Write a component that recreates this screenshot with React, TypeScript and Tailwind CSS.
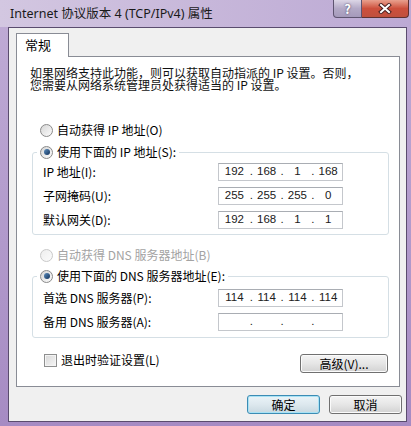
import type { ReactNode } from 'react';

const ipRows = [
    { label: 'IP 地址(I):', parts: ['192', '168', '1', '168'] },
    { label: '子网掩码(U):', parts: ['255', '255', '255', '0'] },
    { label: '默认网关(D):', parts: ['192', '168', '1', '1'] },
];

const dnsRows = [
    { label: '首选 DNS 服务器(P):', parts: ['114', '114', '114', '114'] },
    { label: '备用 DNS 服务器(A):', parts: ['', '', '', ''] },
];

function Radio({ checked, disabled }: { checked?: boolean; disabled?: boolean }) {
    return (
        <span
            className={`w-[13px] h-[13px] rounded-full border flex items-center justify-center shrink-0 bg-gradient-to-br ${disabled ? 'border-[#c9c9c9] from-[#eeeeee] to-[#fbfbfb]' : 'border-[#8a8a8a] from-[#d6d6d6] to-[#fcfcfc]'}`}
        >
            {checked && <span className="w-[6px] h-[6px] rounded-full bg-gradient-to-br from-[#5d8fc0] to-[#12325a]" />}
        </span>
    );
}

function RadioRow({ children, checked, disabled }: { children: ReactNode; checked?: boolean; disabled?: boolean }) {
    return (
        <div className={`flex items-center gap-[4px] h-[16px] leading-[16px] ${disabled ? 'text-[#a3a3a3]' : 'text-black'}`}>
            <Radio checked={checked} disabled={disabled} />
            <span>{children}</span>
        </div>
    );
}

function IpBox({ parts }: { parts: string[] }) {
    return (
        <div className="w-[125px] h-[18px] border border-[#c4c7cc] border-t-[#a9adb3] bg-white flex items-center font-['Liberation_Sans',sans-serif] text-[11.5px] text-[#202020]">
            {parts.map((p, i) => (
                <div key={i} className="flex flex-1 items-center">
                    {i > 0 && <span className="w-[3px] text-center">.</span>}
                    <span className="flex-1 text-center">{p}</span>
                </div>
            ))}
        </div>
    );
}

function AddrRows({ rows, first }: { rows: { label: string; parts: string[] }[]; first: number }) {
    return (
        <div className="flex flex-col gap-[6px]" style={{ paddingTop: first }}>
            {rows.map(r => (
                <div key={r.label} className="flex items-center pl-[10px]">
                    <span className="w-[175px]">{r.label}</span>
                    <IpBox parts={r.parts} />
                </div>
            ))}
        </div>
    );
}

function Btn({ children, w, primary }: { children: ReactNode; w: string; primary?: boolean }) {
    return (
        <button
            className={`${w} h-[19px] rounded-[3px] border text-[12px] leading-none text-black bg-gradient-to-b ${primary ? 'border-[#3c8cb4] from-[#eaf4f8] via-[#dde8ee] to-[#c8d8e0] shadow-[inset_0_0_0_1px_#a8e2f5]' : 'border-[#707070] from-[#f4f4f4] via-[#e6e6e6] to-[#d2d2d2] shadow-[inset_0_0_0_1px_#fbfbfb]'}`}
        >
            {children}
        </button>
    );
}

export default function App() {
    return (
        <div className="w-[411px] h-[426px] overflow-hidden bg-gradient-to-b from-[#c0acd6] to-[#a68bc3] flex flex-col font-['Noto_Sans_CJK_SC','Noto_Sans',sans-serif] text-[12px] text-black">
            {/* title bar */}
            <div className="h-[27px] flex items-start pl-[10px] pr-[2px] bg-gradient-to-r from-[#d3c7e1] via-[#c7b7da] to-[#bca9d4]">
                <span className="mt-[5px] text-[12.5px] leading-[18px] text-[#1a1a1a] font-['Noto_Sans','Noto_Sans_CJK_SC',sans-serif]">
                    Internet 协议版本 4 (TCP/IPv4) 属性
                </span>
                <div className="ml-auto flex h-[18px]">
                    <div className="w-[29px] h-[18px] rounded-bl-[4px] border border-t-0 border-[#5e5470] bg-gradient-to-b from-[#dcd6e6] via-[#b3a9c6] to-[#a59abb] flex items-center justify-center text-white font-bold text-[13px] [text-shadow:0_0_2px_#3a3050]">
                        ?
                    </div>
                    <div className="w-[47px] h-[18px] rounded-br-[4px] border border-l-0 border-t-0 border-[#5e3030] bg-gradient-to-b from-[#e8a08e] via-[#cc4f3c] to-[#c0503e] flex items-center justify-center">
                        <svg width="14" height="11" viewBox="0 0 14 11">
                            <path d="M3 2 L11 9 M11 2 L3 9" stroke="#4a2020" strokeWidth="4" strokeLinecap="square" />
                            <path d="M3 2 L11 9 M11 2 L3 9" stroke="#ffffff" strokeWidth="2" strokeLinecap="square" />
                        </svg>
                    </div>
                </div>
            </div>

            {/* client area */}
            <div className="ml-[8px] w-[399px] h-[395px] border border-[#5a4c6e] bg-[#f0f0f0] flex flex-col">
                <div className="ml-[7px] mt-[5px] w-[53px] h-[24px] -mb-[1px] relative z-10 border border-b-0 border-[#898c95] bg-white pl-[8px] leading-[22px] text-[13px]">
                    常规
                </div>
                <div className="ml-[7px] w-[384px] h-[331px] border border-[#898c95] bg-white flex flex-col">
                    <p className="pl-[13px] mt-[10px] leading-[12px] text-[12px] text-[#111]">
                        如果网络支持此功能，则可以获取自动指派的 IP 设置。否则，
                        <br />
                        您需要从网络系统管理员处获得适当的 IP 设置。
                    </p>

                    <div className="pl-[23px] mt-[31px]">
                        <RadioRow>自动获得 IP 地址(O)</RadioRow>
                    </div>

                    <fieldset className="ml-[15px] mt-[6px] w-[357px] border border-[#d5dfe5] rounded-[3px] px-0 pb-[5px] min-w-0">
                        <legend className="ml-[4px] px-[3px]">
                            <RadioRow checked>使用下面的 IP 地址(S):</RadioRow>
                        </legend>
                        <AddrRows rows={ipRows} first={3} />
                    </fieldset>

                    <div className="pl-[23px] mt-[12px]">
                        <RadioRow disabled>自动获得 DNS 服务器地址(B)</RadioRow>
                    </div>

                    <fieldset className="ml-[15px] mt-[5px] w-[357px] border border-[#d5dfe5] rounded-[3px] px-0 pb-[6px] min-w-0">
                        <legend className="ml-[4px] px-[3px]">
                            <RadioRow checked>使用下面的 DNS 服务器地址(E):</RadioRow>
                        </legend>
                        <AddrRows rows={dnsRows} first={5} />
                    </fieldset>

                    <div className="flex items-start justify-between pl-[27px] pr-[11px] mt-[16px]">
                        <label className="flex items-center gap-[4px] h-[14px] mt-[-1px]">
                            <span className="w-[13px] h-[13px] border border-[#8e8f8f] bg-gradient-to-br from-[#d8d8d8] to-[#f6f6f6] shadow-[inset_0_0_0_1px_#f4f4f4]" />
                            <span>退出时验证设置(L)</span>
                        </label>
                        <Btn w="w-[88px]">高级(V)...</Btn>
                    </div>
                </div>

                <div className="flex justify-end gap-[9px] pr-[4px] mt-[8px]">
                    <Btn w="w-[73px]" primary>确定</Btn>
                    <Btn w="w-[73px]">取消</Btn>
                </div>
            </div>
        </div>
    );
}
